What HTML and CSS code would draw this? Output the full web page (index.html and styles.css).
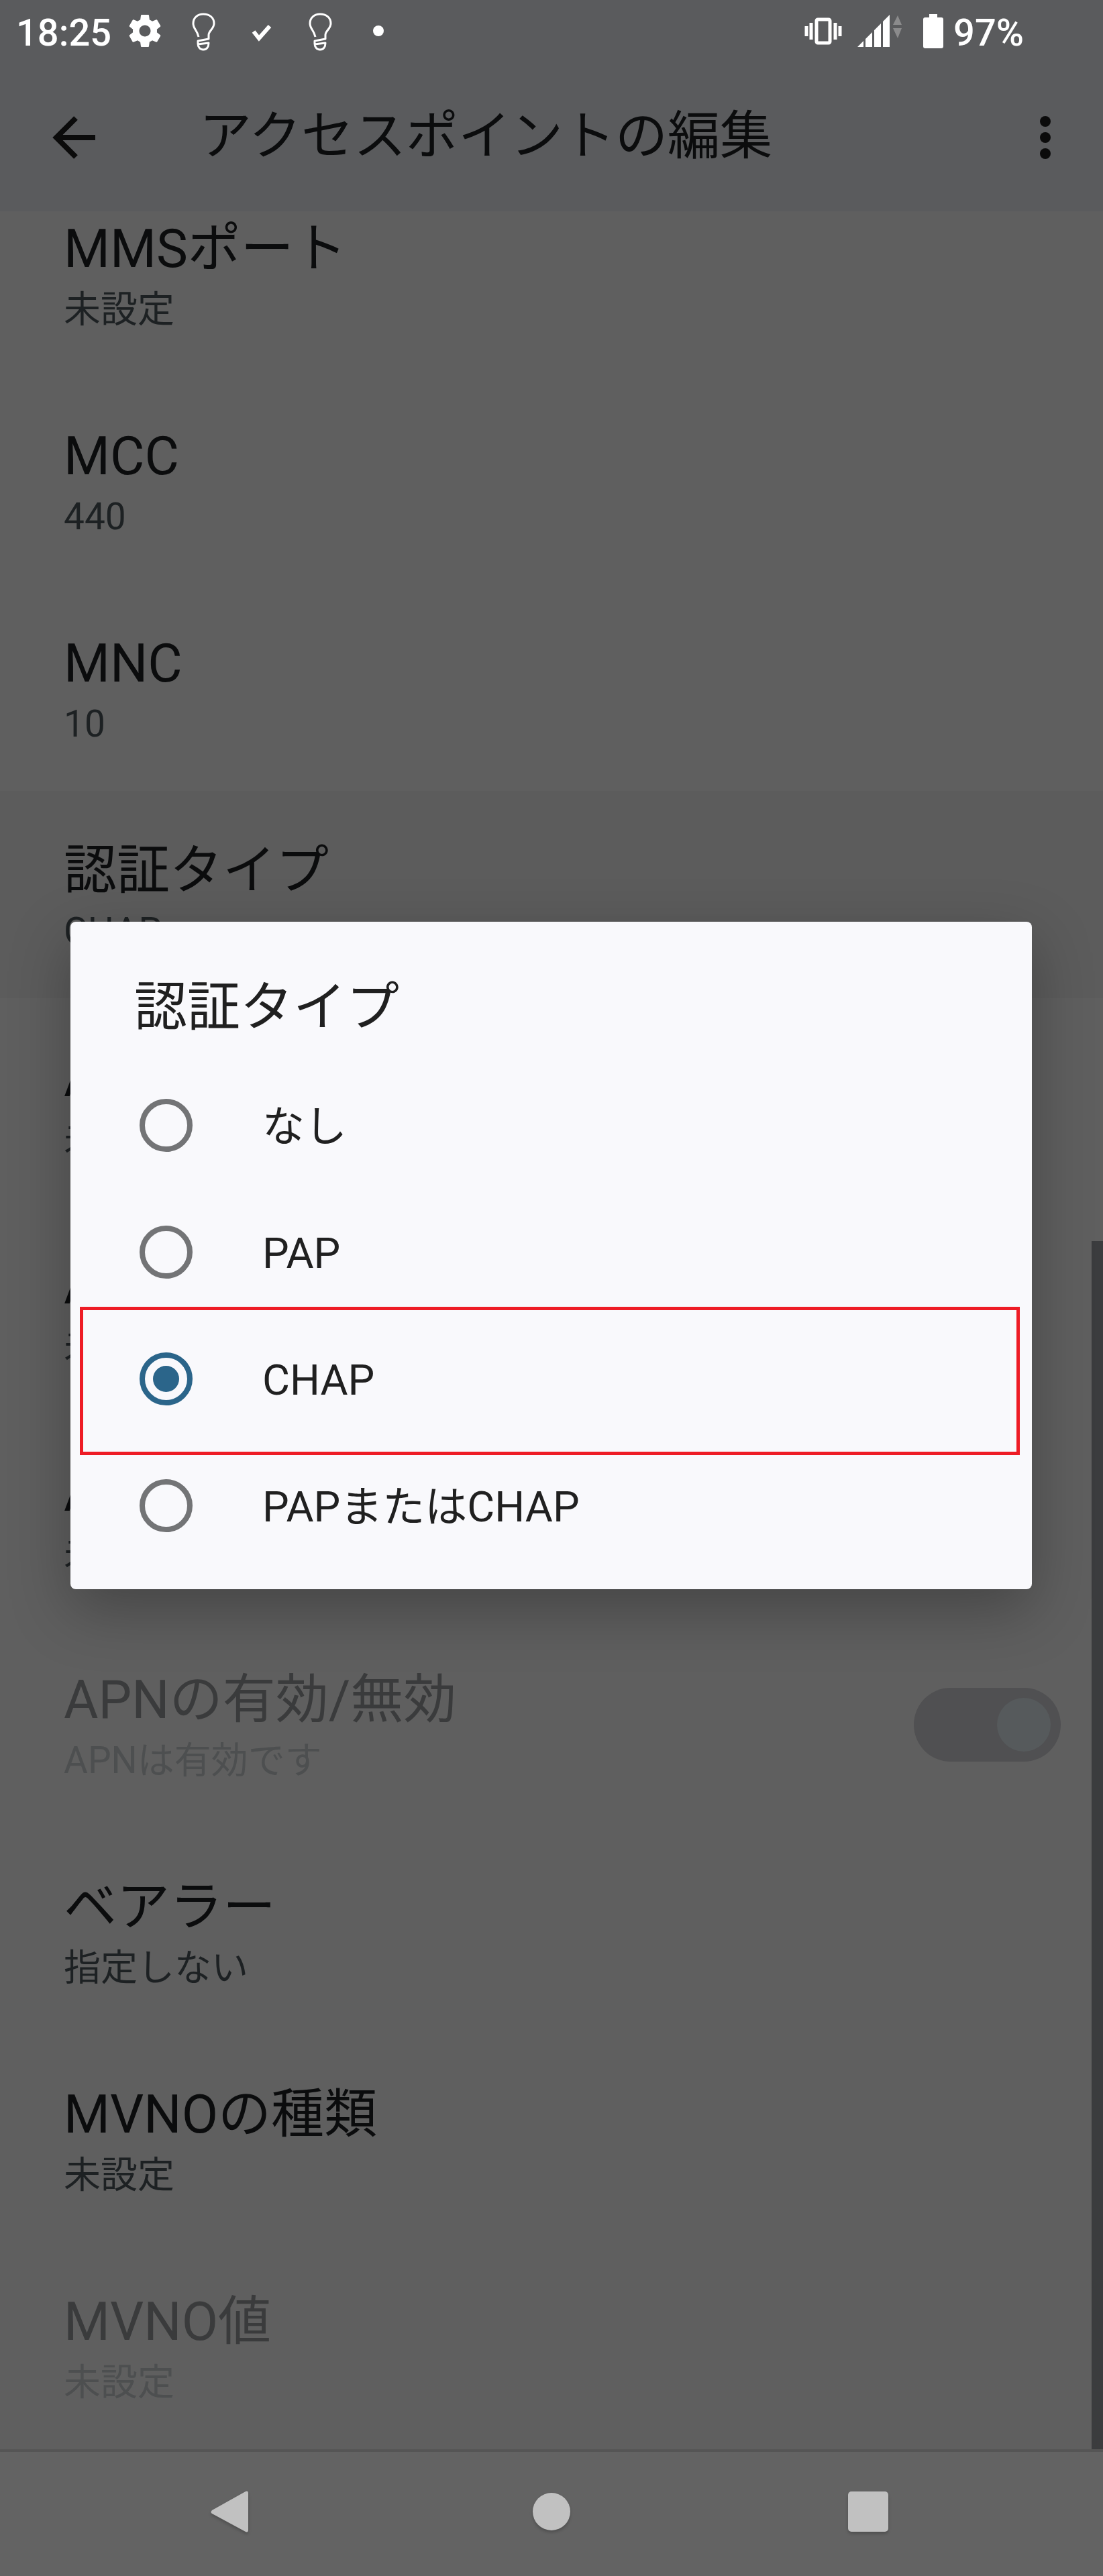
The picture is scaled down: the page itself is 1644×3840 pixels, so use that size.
FILE: index.html
```html
<!DOCTYPE html>
<html lang="ja">

<head>
  <meta charset="utf-8">
  <meta name="viewport" content="width=device-width, initial-scale=1">
  <title>アクセスポイントの編集</title>
  <link rel="stylesheet" href="styles.css">
</head>

<body>
  <svg class="defs" width="0" height="0" aria-hidden="true">
    <symbol id="bulb" viewBox="0 0 60 60">
      <path d="M23 39 C21 29 15 27 15 19 C15 10 22 5 30 5 C39 5 46 10 46 19 C46 27 38 30 38 36 V42 L22 45 V49 C22 54 25 58 30 58 C35 58 38 54 38 48 L22 50" fill="none" stroke="#fff" stroke-width="3" stroke-linejoin="round" />
    </symbol>
  </svg>

  <div class="status">
    <span class="time">18:25</span>
    <div class="status-left">
      <svg class="icon" viewBox="0 0 24 24">
        <path fill="#fff" d="M19.14 12.94c.04-.3.06-.61.06-.94 0-.32-.02-.64-.07-.94l2.03-1.58c.18-.14.23-.41.12-.61l-1.92-3.32c-.12-.22-.37-.29-.59-.22l-2.39.96c-.5-.38-1.03-.7-1.62-.94l-.36-2.54c-.04-.24-.24-.41-.48-.41h-3.84c-.24 0-.43.17-.47.41l-.36 2.54c-.59.24-1.13.57-1.62.94l-2.39-.96c-.22-.08-.47 0-.59.22L2.74 8.87c-.12.21-.08.47.12.61l2.03 1.58c-.05.3-.09.63-.09.94s.02.64.07.94l-2.03 1.58c-.18.14-.23.41-.12.61l1.92 3.32c.12.22.37.29.59.22l2.39-.96c.5.38 1.03.7 1.62.94l.36 2.54c.05.24.24.41.48.41h3.84c.24 0 .44-.17.47-.41l.36-2.54c.59-.24 1.13-.56 1.62-.94l2.39.96c.22.08.47 0 .59-.22l1.92-3.32c.12-.22.07-.47-.12-.61l-2.01-1.58zM12 15.4c-1.9 0-3.4-1.5-3.4-3.4s1.5-3.4 3.4-3.4 3.4 1.5 3.4 3.4-1.5 3.4-3.4 3.4z" />
      </svg>
      <svg class="icon"><use href="#bulb" /></svg>
      <svg class="icon" viewBox="0 0 60 60">
        <path d="M18 31 L26 41 L42 23" fill="none" stroke="#fff" stroke-width="6" />
      </svg>
      <svg class="icon"><use href="#bulb" /></svg>
      <svg class="icon" viewBox="0 0 60 60">
        <circle cx="30" cy="30" r="8" fill="#fff" />
      </svg>
    </div>
    <div class="status-right">
      <svg class="icon" viewBox="0 0 60 60">
        <rect x="20" y="13" width="20" height="35" rx="2" fill="none" stroke="#fff" stroke-width="5" />
        <path d="M12 18v25M48 18v25M5 23v15M55 23v15" stroke="#fff" stroke-width="5" />
      </svg>
      <svg class="signal" viewBox="0 0 72 60">
        <path fill="#fff" d="M1 54 L10 45 V54 Z M13 54 V42 L23 32 V54 Z M26 54 V29 L36 19 V54 Z M39 54 V16 L49 6 V54 Z" />
        <path fill="#8b8b8c" d="M54 21 L61 7 L67 21 Z M54 26 H67 L61 41 Z" />
      </svg>
      <svg class="battery" viewBox="0 0 32 52">
        <path fill="#fff" d="M10 1 H22 V6 H28 Q31 6 31 9 V49 Q31 52 28 52 H4 Q1 52 1 49 V9 Q1 6 4 6 H10 Z" />
      </svg>
      <span class="percent">97%</span>
    </div>
  </div>

  <header class="appbar">
    <button class="iconButton" aria-label="戻る">
      <svg class="icon-large" viewBox="0 0 96 96">
        <path d="M79 49 H22 M50 20 L21 49 L50 78" fill="none" stroke="#0b0b0b" stroke-width="8" />
      </svg>
    </button>
    <h1>アクセスポイントの編集</h1>
    <button class="iconButton" aria-label="その他のオプション">
      <svg class="icon-large" viewBox="0 0 96 96" fill="#0b0b0b">
        <circle cx="48" cy="25" r="8" />
        <circle cx="48" cy="49" r="8" />
        <circle cx="48" cy="73" r="8" />
      </svg>
    </button>
  </header>

  <main>
    <ul class="settings">
      <li>
        <div class="title">MMSポート</div>
        <div class="summary">未設定</div>
      </li>
      <li>
        <div class="title">MCC</div>
        <div class="summary">440</div>
      </li>
      <li>
        <div class="title">MNC</div>
        <div class="summary">10</div>
      </li>
      <li class="pressed">
        <div class="title">認証タイプ</div>
        <div class="summary">CHAP</div>
      </li>
      <li>
        <div class="title">A</div>
        <div class="summary">未</div>
      </li>
      <li>
        <div class="title">A</div>
        <div class="summary">未</div>
      </li>
      <li>
        <div class="title">A</div>
        <div class="summary">未</div>
      </li>
      <li class="disabled switchRow">
        <label for="apnEnabled">
          <span class="title">APNの有効/無効</span>
          <span class="summary">APNは有効です</span>
        </label>
        <input type="checkbox" class="switch" id="apnEnabled" checked disabled>
      </li>
      <li>
        <div class="title">ベアラー</div>
        <div class="summary">指定しない</div>
      </li>
      <li>
        <div class="title">MVNOの種類</div>
        <div class="summary">未設定</div>
      </li>
      <li class="disabled">
        <div class="title">MVNO値</div>
        <div class="summary">未設定</div>
      </li>
    </ul>
    <div class="scrollbar"></div>
  </main>

  <nav class="navbar">
    <button class="iconButton" aria-label="戻る">
      <svg class="icon-large" viewBox="0 0 96 96">
        <path d="M14 42 L64 14 Q68 12 68 17 V71 Q68 76 64 74 L14 47 Q11 45 14 42 Z" />
      </svg>
    </button>
    <button class="iconButton" aria-label="ホーム">
      <svg class="icon-large" viewBox="0 0 96 96">
        <circle cx="48" cy="44" r="28" />
      </svg>
    </button>
    <button class="iconButton" aria-label="最近使ったアプリ">
      <svg class="icon-large" viewBox="0 0 96 96">
        <rect x="18" y="14" width="60" height="60" rx="5" />
      </svg>
    </button>
  </nav>

  <div class="overlay">
    <form class="dialog" role="dialog" aria-labelledby="dialogTitle">
      <h2 id="dialogTitle">認証タイプ</h2>
      <label class="option"><input type="radio" name="auth"><span>なし</span></label>
      <label class="option"><input type="radio" name="auth"><span>PAP</span></label>
      <label class="option marked"><input type="radio" name="auth" checked><span>CHAP</span></label>
      <label class="option"><input type="radio" name="auth"><span>PAPまたはCHAP</span></label>
    </form>
  </div>
</body>

</html>
```
FILE: styles.css
```css
* {
  box-sizing: border-box;
}

body {
  margin: 0;
  min-height: 100vh;
  display: flex;
  flex-direction: column;
  position: relative;
  background: #5f5f5f;
  color: #0b0c0d;
  font-family: Roboto, "Noto Sans CJK JP", sans-serif;
}

svg {
  display: block;
  flex-shrink: 0;
}

.defs {
  position: absolute;
}

/* status bar */
.status {
  height: 92px;
  display: flex;
  align-items: center;
  padding: 0 118px 0 24px;
  background: #5a5b5d;
  color: #fff;
  font-size: 56px;
  font-weight: 500;
  line-height: 64px;
}

.time,
.percent {
  padding-top: 6px;
}

.status-left {
  display: flex;
  gap: 27px;
  margin-left: 20px;
}

.status-right {
  display: flex;
  align-items: center;
  gap: 20px;
  margin-left: auto;
}

.icon {
  width: 60px;
  height: 60px;
}

.icon-large {
  width: 96px;
  height: 96px;
}

.signal {
  width: 72px;
  height: 60px;
}

.battery {
  width: 32px;
  height: 52px;
  margin-left: 6px;
}

.percent {
  margin-left: -6px;
}

/* app bar */
.appbar {
  height: 223px;
  display: flex;
  align-items: center;
  padding: 0 38px 0 63px;
  background: #5a5b5d;
}

.appbar h1 {
  flex: 1;
  margin: 0 0 0 138px;
  font-size: 78px;
  font-weight: 400;
  line-height: 96px;
}

.iconButton {
  padding: 0;
  border: none;
  background: none;
}

/* settings list */
main {
  flex: 1;
  position: relative;
}

.settings {
  list-style-type: none;
  margin: 0;
  padding: 0;
}

.settings li {
  padding: 71px 63px 68px 95px;
}

/* the list is scrolled, the first row is partly under the app bar */
.settings li:first-child {
  padding-top: 8px;
}

.title {
  display: block;
  font-size: 79px;
  line-height: 96px;
}

.summary {
  display: block;
  margin-top: 10px;
  color: #1d2123;
  font-size: 55px;
  line-height: 64px;
}

.pressed {
  background: #5c5c5c;
}

.disabled .title {
  color: #3a3b3c;
}

.disabled .summary {
  color: #4d4f50;
}

.switchRow {
  display: flex;
  align-items: center;
  justify-content: space-between;
}

.switch {
  appearance: none;
  display: flex;
  align-items: center;
  justify-content: flex-end;
  width: 219px;
  height: 110px;
  margin: 0;
  padding: 15px;
  border-radius: 55px;
  background: #505052;
}

.switch::before {
  content: "";
  width: 80px;
  height: 80px;
  border-radius: 50%;
  background: #565a5c;
}

.scrollbar {
  position: absolute;
  top: 46%;
  right: 0;
  bottom: 0;
  width: 17px;
  background: #3b3c3e;
}

/* navigation bar */
.navbar {
  height: 189px;
  display: grid;
  grid-template-columns: repeat(3, 1fr);
  align-items: center;
  justify-items: center;
  padding: 0 114px;
  border-top: 4px solid #555;
  background: #636363;
}

.navbar svg {
  fill: #c1c1c1;
  filter: drop-shadow(0 3px 2px rgba(0, 0, 0, 0.2));
}

/* dialog */
.overlay {
  position: absolute;
  inset: 92px 0 189px;
  display: flex;
  align-items: center;
  padding: 0 106px 0 105px;
}

.dialog {
  flex: 1;
  padding-bottom: 30px;
  border-radius: 8px;
  background: #f9f9fc;
  color: #202020;
  box-shadow: 0 30px 90px rgba(0, 0, 0, 0.28);
}

.dialog h2 {
  margin: 0;
  padding: 80px 95px 33px;
  font-size: 79px;
  font-weight: 400;
  line-height: 96px;
}

.option {
  position: relative;
  display: flex;
  align-items: center;
  gap: 104px;
  height: 189px;
  padding: 0 103px;
  font-size: 63px;
  line-height: 72px;
}

.option span {
  padding-top: 4px;
}

.option input {
  appearance: none;
  display: grid;
  place-items: center;
  width: 79px;
  height: 79px;
  margin: 0;
  border: 8px solid #737476;
  border-radius: 50%;
}

.option input:checked {
  border-color: #2b658a;
}

.option input:checked::before {
  content: "";
  width: 39px;
  height: 39px;
  border-radius: 50%;
  background: #2b658a;
}

.marked::after {
  content: "";
  position: absolute;
  inset: -13px 18px -19px 14px;
  border: 5px solid #ee1c25;
}
```
